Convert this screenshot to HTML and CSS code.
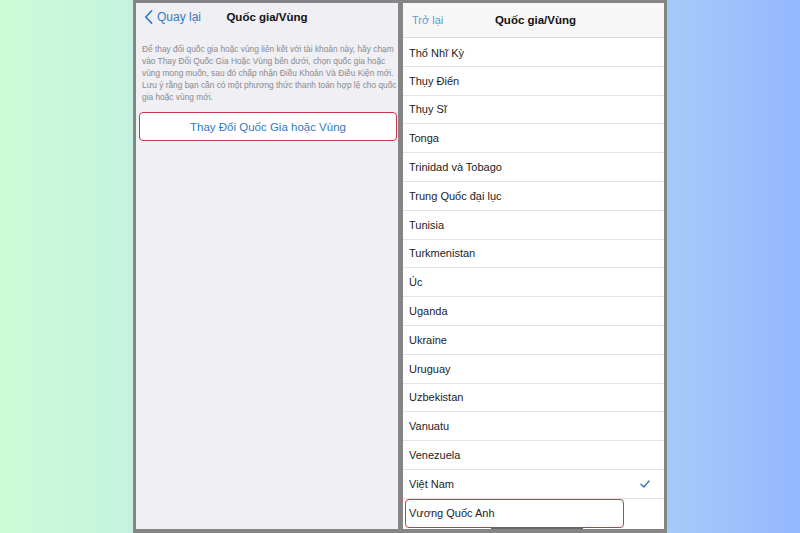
FILE: index.html
```html
<!DOCTYPE html>
<html lang="vi">
<head>
  <meta charset="UTF-8">
  <title>Quốc gia/Vùng</title>
  <link rel="stylesheet" href="styles.css">
</head>
<body>

<div class="frame">
  <div class="screen left">
    <div class="nav">
      <span class="back">
        <svg width="9" height="14" viewBox="0 0 9 14"><path d="M7.5 1 L1.8 7 L7.5 13" fill="none" stroke="#3478c6" stroke-width="1.8" stroke-linecap="round" stroke-linejoin="round"/></svg>
        Quay lại
      </span>
      <span class="title">Quốc gia/Vùng</span>
    </div>
    <p class="note">
      Để thay đổi quốc gia hoặc vùng liên kết với tài khoản này, hãy chạm<br>
      vào Thay Đổi Quốc Gia Hoặc Vùng bên dưới, chọn quốc gia hoặc<br>
      vùng mong muốn, sau đó chấp nhận Điều Khoản Và Điều Kiện mới.<br>
      Lưu ý rằng bạn cần có một phương thức thanh toán hợp lệ cho quốc<br>
      gia hoặc vùng mới.
    </p>
    <div class="change-btn">Thay Đổi Quốc Gia hoặc Vùng</div>
  </div>

  <div class="screen right">
    <div class="nav nav-light">
      <span class="back back-text">Trở lại</span>
      <span class="title">Quốc gia/Vùng</span>
    </div>
    <ul class="list">
      <li>Thổ Nhĩ Kỳ</li>
      <li>Thụy Điển</li>
      <li>Thụy Sĩ</li>
      <li>Tonga</li>
      <li>Trinidad và Tobago</li>
      <li>Trung Quốc đại lục</li>
      <li>Tunisia</li>
      <li>Turkmenistan</li>
      <li>Úc</li>
      <li>Uganda</li>
      <li>Ukraine</li>
      <li>Uruguay</li>
      <li>Uzbekistan</li>
      <li>Vanuatu</li>
      <li>Venezuela</li>
      <li class="checked">Việt Nam
        <svg width="10" height="8" viewBox="0 0 10 8"><path d="M1 4.2 L3.8 7 L9 1" fill="none" stroke="#3478c6" stroke-width="1.5" stroke-linecap="round" stroke-linejoin="round"/></svg>
      </li>
      <li class="picked"><span class="mark">Vương Quốc Anh</span></li>
    </ul>
    <div class="home-bar"></div>
  </div>
</div>

</body>
</html>
```

FILE: styles.css
```css
* { box-sizing: border-box; }
body {
  margin: 0;
  height: 533px;
  overflow: hidden;
  font-family: 'Liberation Sans', Arial, sans-serif;
  background: linear-gradient(to right, #ccfdd6 0%, #c4f2e0 17%, #a6cbf8 83%, #94b8fe 100%);
}
.frame {
  margin-left: 133px;
  width: 534px;
  height: 533px;
  background: #858585;
  padding: 3px 3px 4px 3px;
  display: flex;
  gap: 5px;
}
.screen {
  position: relative;
  height: 100%;
  overflow: hidden;
}
.left {
  width: 262px;
  background: #efeff4;
}
.right {
  width: 261px;
  background: #fff;
}
.nav {
  height: 28px;
  display: flex;
  align-items: center;
  position: relative;
  padding-left: 8px;
}
.nav .title {
  position: absolute;
  left: 0;
  right: 0;
  text-align: center;
  font-weight: bold;
  font-size: 11.5px;
  color: #111;
  pointer-events: none;
}
.back {
  display: flex;
  align-items: center;
  gap: 4px;
  color: #3478c6;
  font-size: 12px;
}
.nav-light {
  height: 35px;
  background: #f7f7f7;
  border-bottom: 1px solid #dcdcdc;
  padding-left: 9px;
}
.nav-light .title { padding-left: 4px; }
.back-text {
  color: #5b9bd6;
  font-size: 11px;
}
.note {
  margin: 12px 4px 0 6px;
  font-size: 8.35px;
  line-height: 12px;
  color: #8a8a8f;
  white-space: nowrap;
}
.change-btn {
  margin: 9px 1px 0 3px;
  height: 29px;
  background: #fff;
  border: 1.5px solid #c9384b;
  border-radius: 4px;
  display: flex;
  align-items: center;
  justify-content: center;
  color: #3478c6;
  font-size: 11.5px;
}
.list {
  list-style: none;
  margin: 0;
  padding: 0;
}
.list li {
  height: 28.8px;
  border-bottom: 1px solid #e4e4e6;
  display: flex;
  align-items: center;
  justify-content: space-between;
  padding: 0 14px 0 6px;
  font-size: 11px;
  color: #1c1c1e;
}
.list li:first-child { padding-top: 2px; }
.list li.picked {
  padding: 0;
  border-bottom: none;
}
.mark {
  display: flex;
  align-items: center;
  width: 219px;
  height: 29px;
  margin-left: 2px;
  padding-left: 3px;
  border: 1.5px solid #c9384b;
  border-radius: 4px;
}
.home-bar {
  position: absolute;
  left: 88px;
  bottom: 0;
  width: 92px;
  height: 2px;
  background: #666;
}
```
